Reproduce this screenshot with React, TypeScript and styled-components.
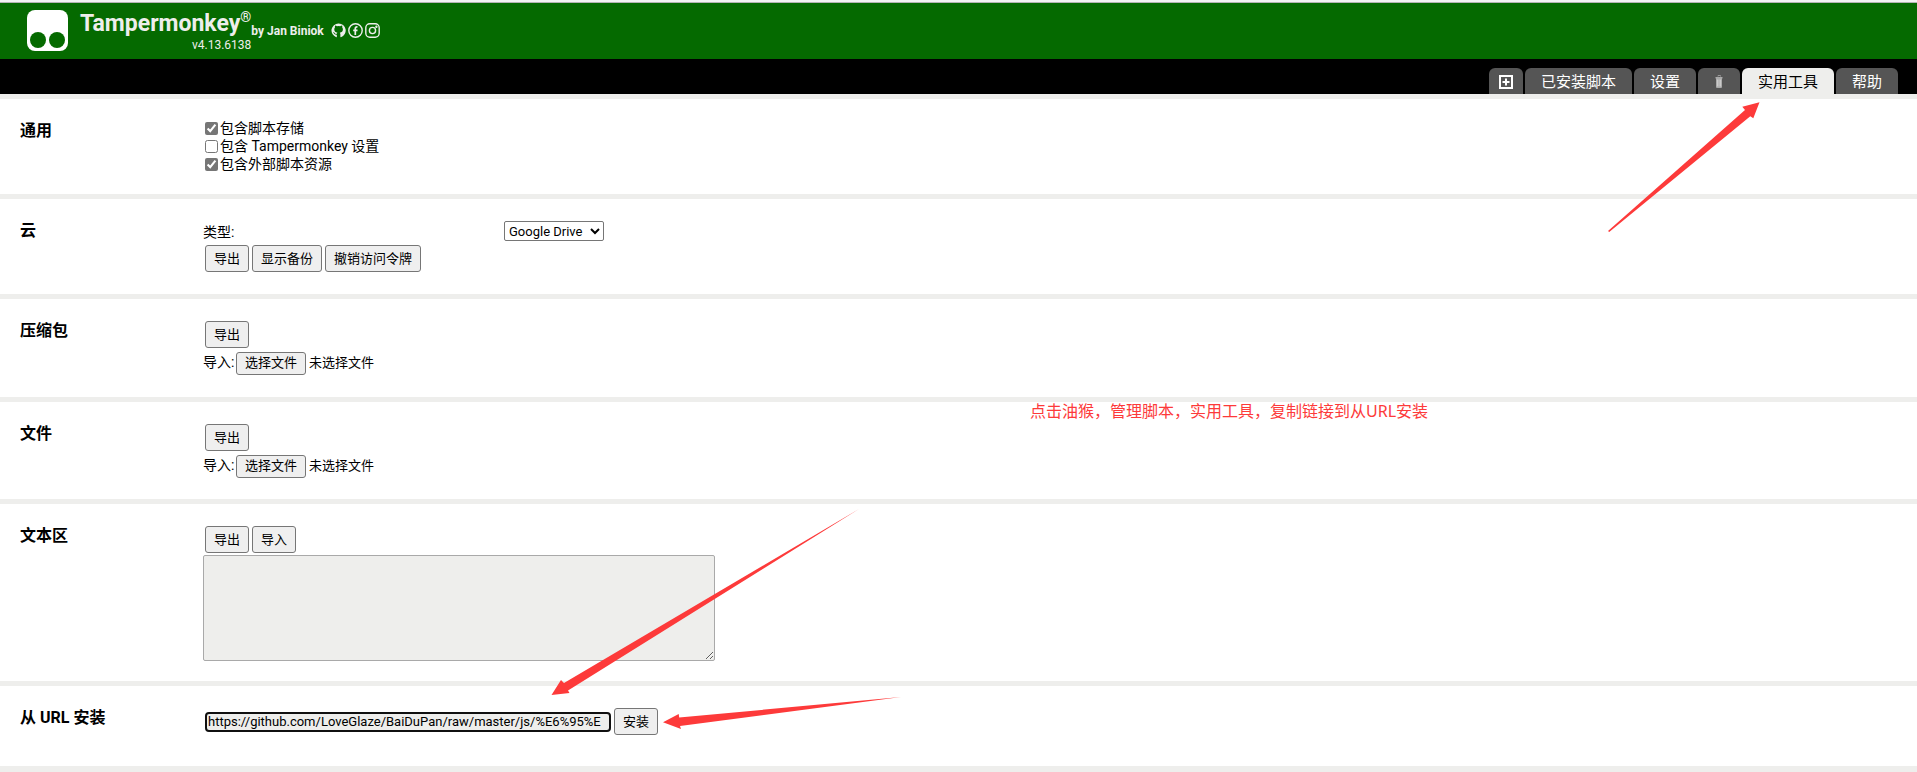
import React from "react";
import styled, { createGlobalStyle } from "styled-components";

const RED = "#fd3a3a";
const PALE = "#eeeeec";

const GlobalStyle = createGlobalStyle`
  * { box-sizing: border-box; }
  body {
    margin: 0;
    background: ${PALE};
    color: #000;
    font-family: Roboto, "Noto Sans CJK SC", sans-serif;
    font-size: 14px;
  }
  button, input, select, textarea { font-family: inherit; margin: 0; }
`;

const Page = styled.div`
  position: relative;
  overflow: hidden;
`;

const Header = styled.header`
  display: flex;
  height: 59px;
  padding: 8px 27px 0;
  gap: 12px;
  background: #056a00;
  border-top: 2px solid #f3f3f3;
  box-shadow: inset 0 1px #b4b4b4;
  color: ${PALE};
`;

const Logo = styled.svg`
  width: 41px;
  height: 41px;
`;

const Brand = styled.div`
  display: flex;
  align-items: flex-start;
`;

const TitleBlock = styled.div`
  display: flex;
  flex-direction: column;
  align-items: flex-end;
`;

const Title = styled.h1`
  margin: 0;
  font-size: 23px;
  line-height: 28px;
  font-weight: 700;
  sup {
    font-size: 14px;
    line-height: 14px;
    vertical-align: top;
  }
`;

const Version = styled.span`
  font-size: 12px;
  line-height: 14px;
`;

const Author = styled.span`
  padding-top: 13px;
  font-size: 12px;
  line-height: 16px;
  font-weight: 700;
`;

const Socials = styled.div`
  display: flex;
  gap: 2px;
  padding: 13px 0 0 7px;
`;

const SocialLink = styled.a`
  display: flex;
  color: inherit;
  svg { width: 15px; height: 15px; }
`;

const TabBar = styled.nav`
  display: flex;
  justify-content: flex-end;
  align-items: flex-end;
  gap: 2px;
  height: 35px;
  padding-right: 19px;
  background: #000;
`;

const Tab = styled.button<{ $active?: boolean; $pad?: number }>`
  display: flex;
  align-items: center;
  height: 26px;
  padding: 2px ${(p) => p.$pad ?? 16}px 0;
  border: 0;
  border-radius: 6px 6px 0 0;
  background: ${(p) => (p.$active ? PALE : "#555")};
  color: ${(p) => (p.$active ? "#000" : "#fff")};
  font-size: 15px;
  line-height: 22px;
`;

const Main = styled.main`
  border-top: 5px solid ${PALE};
`;

const Section = styled.section<{ $bottom?: number }>`
  display: flex;
  padding: 20px 20px ${(p) => p.$bottom ?? 20}px;
  background: #fff;
  border-bottom: 5px solid ${PALE};
`;

const Heading = styled.h2`
  flex: none;
  width: 183px;
  margin: 0;
  font-size: 16px;
  line-height: 24px;
  font-weight: 700;
`;

const Content = styled.div`
  flex: 1;
  min-width: 0;
`;

const CheckRow = styled.label`
  display: flex;
  align-items: center;
  gap: 2px;
  height: 18px;
  padding-left: 2px;
  line-height: 18px;
`;

const Checkbox = styled.input`
  width: 13px;
  height: 13px;
  accent-color: #767676;
`;

const FieldRow = styled.div`
  display: flex;
  align-items: center;
  height: 24px;
`;

const FieldLabel = styled.label`
  width: 301px;
`;

const Select = styled.select`
  width: 100px;
  height: 20px;
  border: 1px solid #767676;
  border-radius: 2px;
  background: #fff;
  color: #000;
  font-size: 13px;
`;

const ButtonRow = styled.div`
  display: flex;
  align-items: center;
  gap: 3px;
  padding: 2px;
`;

const Button = styled.button`
  height: 27px;
  padding: 0 8px 2px;
  border: 1px solid #767676;
  border-radius: 3px;
  background: #efefef;
  color: #000;
  font-size: 13px;
`;

const FileRow = styled.div`
  display: flex;
  align-items: center;
  padding: 2px 0;
  position: relative;
`;

const FileInput = styled.input`
  position: absolute;
  left: 33px;
  width: 69px;
  height: 23px;
  opacity: 0;
`;

const FilePrompt = styled.label`
  display: flex;
  align-items: flex-start;
  gap: 3px;
  font-size: 13px;
  line-height: 21px;
`;

const FileCaption = styled.span`
  width: 30px;
  font-size: 14px;
  white-space: nowrap;
`;

const FileButton = styled.span`
  height: 23px;
  padding: 0 8px;
  border: 1px solid #767676;
  border-radius: 3px;
  background: #efefef;
  line-height: 19px;
`;

const TextArea = styled.textarea`
  display: block;
  width: 512px;
  height: 106px;
  border: 1px solid #a9a9a9;
  border-radius: 2px;
  background: ${PALE};
`;

const UrlInput = styled.input`
  width: 406px;
  height: 20px;
  padding: 0 1px;
  border: 2px solid #101010;
  border-radius: 4px;
  outline: none;
  background: ${PALE};
  color: #000;
  font-size: 13px;
`;

const Note = styled.p`
  position: absolute;
  left: 1030px;
  top: 400px;
  margin: 0;
  color: ${RED};
  font-family: "Noto Sans", "Noto Sans CJK SC", sans-serif;
  font-size: 16px;
  line-height: 22px;
  white-space: nowrap;
`;

const Arrow = styled.svg<{ $x: number; $y: number }>`
  position: absolute;
  left: ${(p) => p.$x}px;
  top: ${(p) => p.$y}px;
  fill: ${RED};
  pointer-events: none;
`;

function FilePicker({ id }: { id: string }) {
  return (
    <FileRow>
      <FileInput id={id} type="file" />
      <FilePrompt htmlFor={id}>
        <FileCaption>导入:</FileCaption>
        <FileButton>选择文件</FileButton>
        <span>未选择文件</span>
      </FilePrompt>
    </FileRow>
  );
}

export default function App() {
  return (
    <Page>
      <GlobalStyle />
      <Header>
        <Logo viewBox="0 0 41 41">
          <rect width="41" height="41" rx="8" fill="#fff" />
          <circle cx="11" cy="30" r="8" fill="#056a00" />
          <circle cx="30" cy="30" r="8" fill="#056a00" />
        </Logo>
        <Brand>
          <TitleBlock>
            <Title>
              Tampermonkey<sup>®</sup>
            </Title>
            <Version>v4.13.6138</Version>
          </TitleBlock>
          <Author>by Jan Biniok</Author>
          <Socials>
            <SocialLink href="#github" aria-label="GitHub">
              <svg viewBox="0 0 16 16" fill="currentColor">
                <path d="M8 0.500A7.500 7.500 0 0 0 5.600 15.100c.4.1.6-.2.6-.4v-2.200c-1.600.1-2.500-.3-3.100-1.500-.2-.4-.5-.7-.9-1 .9-.2 1.500.4 1.900 1 .5.7 1.200.8 2.100.5.1-.5.3-.8.6-1.100-2-.4-3.300-1.400-3.300-3.700 0-.9.3-1.500.8-2.100-.2-.6-.2-1.300.1-2 .8 0 1.400.3 2 .8a7 7 0 0 1 3.400 0c.6-.5 1.200-.8 2-.8.3.7.3 1.400.1 2 .5.600.8 1.200.8 2.100 0 2.300-1.300 3.300-3.300 3.700.400.4.6.9.6 1.600v2.700c0 .2.200.5.6.4A7.500 7.500 0 0 0 8 .5z" />
              </svg>
            </SocialLink>
            <SocialLink href="#facebook" aria-label="Facebook">
              <svg viewBox="0 0 15 15" fill="none" stroke="currentColor" strokeWidth="1.4">
                <circle cx="7.5" cy="7.5" r="6.700" />
                <path d="M7.300 12V5.600c0-1.200.7-1.800 2.200-1.600M5.200 7.400h4.300" strokeWidth="1.700" />
              </svg>
            </SocialLink>
            <SocialLink href="#instagram" aria-label="Instagram">
              <svg viewBox="0 0 15 15" fill="none" stroke="currentColor" strokeWidth="1.4">
                <rect x="0.8" y="0.8" width="13.4" height="13.4" rx="4" />
                <circle cx="7.5" cy="7.5" r="3.1" />
                <circle cx="11.4" cy="3.7" r="0.5" fill="currentColor" />
              </svg>
            </SocialLink>
          </Socials>
        </Brand>
      </Header>
      <TabBar>
        <Tab $pad={10} aria-label="新建脚本">
          <svg width="14" height="15" viewBox="0 0 14 15" fill="none" stroke="#fff" strokeWidth="2">
            <rect x="1" y="1" width="12" height="12" />
            <path d="M3.500 7h7M7 3.500v7" />
          </svg>
        </Tab>
        <Tab>已安装脚本</Tab>
        <Tab>设置</Tab>
        <Tab aria-label="回收站">
          <svg width="10" height="14" viewBox="0 0 10 14">
            <path d="M4 1.500V0.500h2.500v1" fill="none" stroke="#999" />
            <path d="M1.500 2h7v1.500h-.5V12q0 1-1 1H3q-1 0-1-1V3.500h-.5z" fill="#aaa" />
            <path d="M3.500 4.500v7M5 4.500v7M6.500 4.500v7" stroke="#d8d8d8" strokeWidth="0.700" />
          </svg>
        </Tab>
        <Tab $active>实用工具</Tab>
        <Tab>帮助</Tab>
      </TabBar>
      <Main>
        <Section $bottom={21}>
          <Heading>通用</Heading>
          <Content>
            <CheckRow>
              <Checkbox type="checkbox" defaultChecked />
              包含脚本存储
            </CheckRow>
            <CheckRow>
              <Checkbox type="checkbox" />
              包含 Tampermonkey 设置
            </CheckRow>
            <CheckRow>
              <Checkbox type="checkbox" defaultChecked />
              包含外部脚本资源
            </CheckRow>
          </Content>
        </Section>
        <Section>
          <Heading>云</Heading>
          <Content>
            <FieldRow>
              <FieldLabel htmlFor="cloud-type">类型:</FieldLabel>
              <Select id="cloud-type">
                <option>Google Drive</option>
              </Select>
            </FieldRow>
            <ButtonRow>
              <Button>导出</Button>
              <Button>显示备份</Button>
              <Button>撤销访问令牌</Button>
            </ButtonRow>
          </Content>
        </Section>
        <Section>
          <Heading>压缩包</Heading>
          <Content>
            <ButtonRow>
              <Button>导出</Button>
            </ButtonRow>
            <FilePicker id="zip-file" />
          </Content>
        </Section>
        <Section $bottom={19}>
          <Heading>文件</Heading>
          <Content>
            <ButtonRow>
              <Button>导出</Button>
            </ButtonRow>
            <FilePicker id="json-file" />
          </Content>
        </Section>
        <Section>
          <Heading>文本区</Heading>
          <Content>
            <ButtonRow>
              <Button>导出</Button>
              <Button>导入</Button>
            </ButtonRow>
            <TextArea aria-label="文本区" />
          </Content>
        </Section>
        <Section $bottom={29}>
          <Heading>从 URL 安装</Heading>
          <Content>
            <ButtonRow>
              <UrlInput
                type="text"
                aria-label="从 URL 安装"
                defaultValue="https://github.com/LoveGlaze/BaiDuPan/raw/master/js/%E6%95%E"
              />
              <Button>安装</Button>
            </ButtonRow>
          </Content>
        </Section>
      </Main>
      <Note>点击油猴，管理脚本，实用工具，复制链接到从URL安装</Note>
      <Arrow $x={1608} $y={102} width="152" height="130">
        <path d="M151.5 0.3 134.3 4.7 137 8 0 129l1.2 1L142.3 14.3l3 2z" />
      </Arrow>
      <Arrow $x={551} $y={509} width="309" height="187">
        <path d="M0.5 186 10 171l3 3L308 0 17 181.5l1.5 2.5z" />
      </Arrow>
      <Arrow $x={663} $y={696} width="238" height="34">
        <path d="M0 26.3 15.7 18l.5 3.5L238 1 17 30l1 3z" />
      </Arrow>
    </Page>
  );
}
